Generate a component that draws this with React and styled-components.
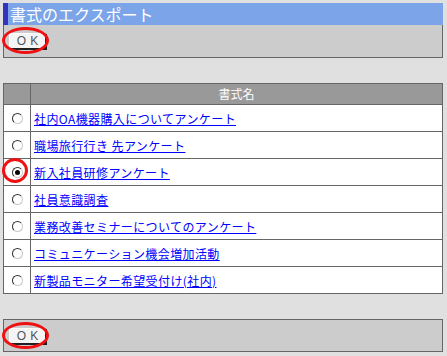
import styled, { createGlobalStyle } from "styled-components"

const rows = [
  { name: "社内OA機器購入についてアンケート" },
  { name: "職場旅行行き 先アンケート" },
  { name: "新入社員研修アンケート", checked: true },
  { name: "社員意識調査" },
  { name: "業務改善セミナーについてのアンケート" },
  { name: "コミュニケーション機会増加活動" },
  { name: "新製品モニター希望受付け(社内)" },
]

const Global = createGlobalStyle`
  html, body {
    margin: 0;
    background: #e0e0e0;
  }
  body {
    font-family: "Noto Sans CJK JP", "Noto Sans", sans-serif;
  }
`

const Page = styled.div`
  width: 440px;
  padding: 3px;
  display: flex;
  flex-direction: column;
`

const Title = styled.div`
  height: 22px;
  background: #7ba5e8;
  border-left: 5px solid #3333bb;
  color: #fff;
  font-size: 16px;
  line-height: 22px;
  padding-left: 2px;
  box-sizing: border-box;
`

const Panel = styled.div`
  height: 33px;
  background: #cccccc;
  border: 1px solid #666;
  border-top: ${(p) => (p.$top ? "1px solid #666" : "none")};
  box-sizing: border-box;
  display: flex;
  align-items: center;
  padding-left: 5px;
  margin-top: ${(p) => (p.$top ? "25px" : "0")};
`

const OkWrap = styled.div`
  position: relative;
  display: flex;
  &::after {
    content: "";
    position: absolute;
    left: -7px;
    top: -6px;
    width: 41px;
    height: 21px;
    border: 3px solid #ee1111;
    border-radius: 50%;
  }
`

const OkButton = styled.button`
  width: 37px;
  height: 16px;
  padding: 0;
  background: #f4f4f4;
  border: 1px solid;
  border-color: #fff #202020 #202020 #fff;
  box-shadow: 1px 1px 0 #202020;
  color: #555;
  font-family: "Liberation Sans", sans-serif;
  font-size: 12px;
  font-weight: normal;
  letter-spacing: 4px;
  line-height: 14px;
  text-indent: 4px;
  text-align: center;
`

const Table = styled.table`
  margin-top: 25px;
  width: 440px;
  border-collapse: collapse;
  background: #fff;
  font-size: 12px;
`

const Head = styled.th`
  height: 20px;
  padding: 0;
  background: #999999;
  border: 1px solid #666;
  color: #fff;
  font-weight: normal;
  font-size: 12px;
  text-align: center;
  line-height: 20px;
  width: ${(p) => (p.$narrow ? "26px" : "auto")};
`

const Cell = styled.td`
  height: 26px;
  padding: 0 0 0 3px;
  border: 1px solid #666;
  width: ${(p) => (p.$radio ? "23px" : "auto")};
  text-align: left;
  vertical-align: middle;
`

const Radio = styled.span`
  position: relative;
  display: block;
  width: 11px;
  height: 11px;
  margin-left: 5px;
  box-sizing: border-box;
  border-radius: 50%;
  border: 1px solid;
  border-color: #303030 #c8c8c8 #c8c8c8 #303030;
  background: #fff;
  ${(p) => (p.$checked ? "&::after{content:'';position:absolute;left:2px;top:2px;width:5px;height:5px;border-radius:50%;background:#000;}" : "")}
`

const Mark = styled.div`
  position: relative;
  &::before {
    content: "";
    position: absolute;
    left: -5px;
    top: -9px;
    width: 20px;
    height: 19px;
    border: 3px solid #ee1111;
    border-radius: 50%;
  }
`

const Item = styled.a`
  color: #0000ff;
  text-decoration: underline;
  font-size: 12px;
  letter-spacing: 0.4px;
  cursor: pointer;
`

const Ok = () => (
  <OkWrap>
    <OkButton>OK</OkButton>
  </OkWrap>
)

export default function App() {
  return (
    <Page>
      <Global />
      <Title>書式のエクスポート</Title>
      <Panel>
        <Ok />
      </Panel>
      <Table>
        <thead>
          <tr>
            <Head $narrow></Head>
            <Head>書式名</Head>
          </tr>
        </thead>
        <tbody>
          {rows.map((r) => (
            <tr key={r.name}>
              <Cell $radio>
                {r.checked ? (
                  <Mark>
                    <Radio $checked />
                  </Mark>
                ) : (
                  <Radio />
                )}
              </Cell>
              <Cell>
                <Item>{r.name}</Item>
              </Cell>
            </tr>
          ))}
        </tbody>
      </Table>
      <Panel $top>
        <Ok />
      </Panel>
    </Page>
  )
}
